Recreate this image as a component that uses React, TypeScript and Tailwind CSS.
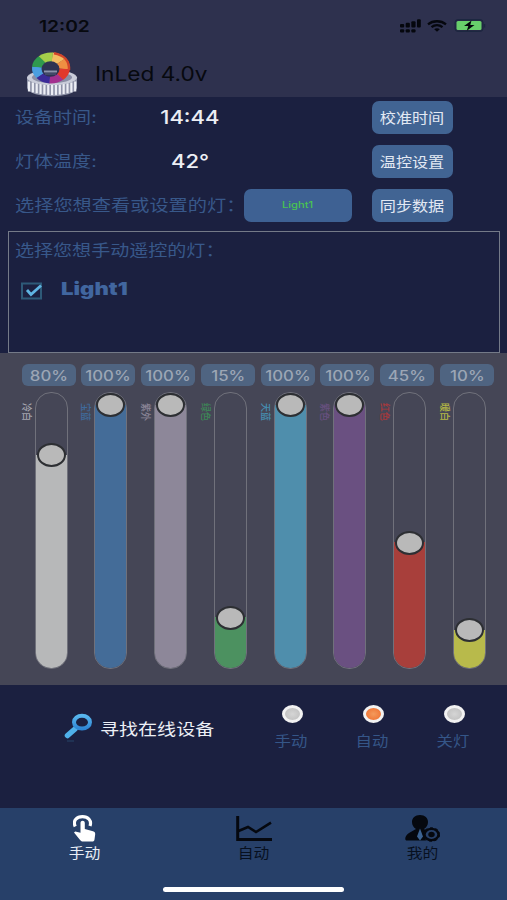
import { useState } from 'react';
import clsx from 'clsx';

type Mode = 'manual' | 'auto' | 'off';

type Channel = {
  name: string;
  value: number;
  fill: string;
  text: string;
};

const CHANNELS: Channel[] = [
  { name: '冷白', value: 80, fill: 'bg-[#b7b8b9]', text: 'text-[#a3a4ae]' },
  { name: '宝蓝', value: 100, fill: 'bg-[#446c98]', text: 'text-[#3f6a9c]' },
  { name: '紫外', value: 100, fill: 'bg-[#8d8799]', text: 'text-[#8d8799]' },
  { name: '绿色', value: 15, fill: 'bg-[#4c9160]', text: 'text-[#3d8757]' },
  { name: '天蓝', value: 100, fill: 'bg-[#4f8eac]', text: 'text-[#458db0]' },
  { name: '紫色', value: 100, fill: 'bg-[#6a5081]', text: 'text-[#68507f]' },
  { name: '红色', value: 45, fill: 'bg-[#a83f3b]', text: 'text-[#a8393c]' },
  { name: '暖白', value: 10, fill: 'bg-[#b8ba4b]', text: 'text-[#b4b745]' },
];

const MODES: { id: Mode; label: string }[] = [
  { id: 'manual', label: '手动' },
  { id: 'auto', label: '自动' },
  { id: 'off', label: '关灯' },
];

const WHEEL = ['#f3bd62', '#ef8f42', '#e2382c', '#a3308f', '#3b2a98', '#4b9ee0', '#2f9a4d', '#a5cf4a'];

// distance of the thumb centre from the top of the track
function thumbTop(value: number) {
  return 12.5 + (100 - value) * 2.505;
}

function Logo() {
  const pt = (deg: number) => {
    const a = (deg * Math.PI) / 180;
    return `${24 + 19 * Math.sin(a)} ${16 - 15.5 * Math.cos(a)}`;
  };
  return (
    <svg width="51" height="45" viewBox="0 0 51 45">
      <path d="M0 25v11c3 11 47 11 50 0V25z" fill="#8f93a8" />
      {Array.from({ length: 13 }, (_, i) => {
        const y = 29 + Math.sin(((i + 0.5) / 13) * Math.PI) * 4;
        return <path key={i} d={`M${2 + i * 3.85} ${y}v10`} stroke="#eceef5" strokeWidth="2.2" />;
      })}
      <ellipse cx="25" cy="25.5" rx="25" ry="7.5" fill="#c9ccd9" />
      <ellipse cx="25" cy="25.5" rx="20" ry="5.5" fill="#8a8ea6" />
      {WHEEL.map((c, i) => (
        <path key={c} d={`M24 16L${pt(i * 45 + 5)}A19 15.5 0 0 1 ${pt(i * 45 + 51)}z`} fill={c} />
      ))}
      <path d="M27 1.3C37 3 42.5 9 42 18" stroke="#d2452a" strokeWidth="2.5" fill="none" />
      <ellipse cx="23.5" cy="17" rx="9" ry="7.7" fill="#2d3352" />
      <path d="M17 19.5h13" stroke="#8d93ab" strokeWidth="2" />
      <path d="M18 22h11" stroke="#4a5070" strokeWidth="1.5" />
    </svg>
  );
}

function StatusIcons() {
  return (
    <div className="flex items-center">
      <svg width="21" height="14" viewBox="0 0 20 13" fill="#05070d">
        <rect x="0" y="4.5" width="4" height="3.5" rx="1" />
        <rect x="5.4" y="3.5" width="4" height="4.5" rx="1" />
        <rect x="10.8" y="2" width="4" height="6" rx="1" />
        <rect x="16.2" y="0" width="3.6" height="8" rx="1" />
        <rect x="0" y="9.5" width="4" height="3.3" rx="1" />
        <rect x="5.4" y="9.5" width="4" height="3.3" rx="1" />
        <rect x="10.8" y="9.5" width="4" height="3.3" rx="1" />
      </svg>
      <svg width="20" height="12" viewBox="0 0 20 12" className="ml-[6px]" fill="none" stroke="#05070d" strokeWidth="2.3">
        <path d="M1 4.3C6 .2 14 .2 19 4.3" />
        <path d="M4.5 7.2c3.2-2.6 7.8-2.6 11 0" />
        <path d="M7.2 9.2c1.6-1.3 4-1.3 5.6 0L10 11.8z" fill="#05070d" stroke="none" />
      </svg>
      <svg width="33" height="13" viewBox="0 0 32 13" className="ml-[7px]">
        <rect x=".5" y=".5" width="28" height="12" rx="3" fill="#252944" stroke="#1c2740" />
        <rect x="2" y="2" width="25" height="9" rx="1.5" fill="#68cf6b" />
        <path d="M17 1.5 9.5 7h4.3l-1.5 4.8L20 6h-4.2z" fill="#05070d" />
        <path d="M30 5v3.5" stroke="#1c2740" strokeWidth="1.4" />
      </svg>
    </div>
  );
}

function ActionButton({ label }: { label: string }) {
  return (
    <button type="button" className="flex h-[33px] w-[81px] items-center justify-center rounded-[7px] bg-[#416493] pb-px text-[14px] text-[#e3e9f3]">
      <span className="-ml-px scale-x-[1.15] whitespace-nowrap">{label}</span>
    </button>
  );
}

function InfoRow({ label, value, action }: { label: string; value: string; action: string }) {
  return (
    <div className="flex h-[41px] items-center">
      <div className="w-[100px] pb-[2px] pl-[15px]">
        <span className="inline-block origin-left scale-x-[1.19] whitespace-nowrap text-[16px] text-[#38588a]">{label}</span>
      </div>
      <div className="flex w-[180px] justify-center pt-px text-[18.5px] font-medium text-[#eceef4]">
        <span className="scale-x-[1.19]">{value}</span>
      </div>
      <div className="ml-[92px]">
        <ActionButton label={action} />
      </div>
    </div>
  );
}

function Slider({ channel }: { channel: Channel }) {
  const top = thumbTop(channel.value);
  return (
    <div className="flex w-[59.8px] flex-col">
      <div className="flex h-[22px] w-[54px] items-center justify-center rounded-[6px] bg-[#4f6481] text-[14px] font-medium text-[#9ca6b5]">
        <span className="scale-x-[1.2]">{channel.value}%</span>
      </div>
      <div className="mt-[6px] flex">
        <div className={clsx('mr-[2px] mt-[11px] h-5 w-[11px] origin-right scale-x-[1.15] text-[9px] font-medium leading-[11px] [writing-mode:vertical-rl] [text-orientation:sideways]', channel.text)}>
          {channel.name}
        </div>
        <div className="relative h-[277px] w-[33px]">
          <div className="flex h-full flex-col justify-end overflow-hidden rounded-[16px] border border-[#70717b]">
            <div className={channel.fill} style={{ height: 276 - top }} />
          </div>
          <div
            className="absolute left-[2px] h-[24px] w-[29px] -translate-y-1/2 rounded-[50%] border-2 border-[#2d2f33] bg-[#b9b9b9]"
            style={{ top: top + 0.5 }}
          />
        </div>
      </div>
    </div>
  );
}

function SearchIcon() {
  return (
    <svg width="30" height="32" viewBox="0 0 30 32" fill="none">
      <defs>
        <linearGradient id="lens" x1="0" y1="0" x2="0" y2="1">
          <stop offset="0" stopColor="#58b6ee" />
          <stop offset="1" stopColor="#2f86d4" />
        </linearGradient>
      </defs>
      <path d="M3.5 22.5 11 16" stroke="#4fb0e9" strokeWidth="5.5" strokeLinecap="round" />
      <ellipse cx="18" cy="9.2" rx="8" ry="6.4" stroke="url(#lens)" strokeWidth="4" />
      <path d="M3 28h7" stroke="#254468" strokeWidth="2" opacity=".5" />
    </svg>
  );
}

function TouchIcon() {
  return (
    <svg width="23" height="27" viewBox="0 0 23 27">
      <path d="M2.2 11.5C-.5 5.500 4 1.600 9.500 1.600S19 5.500 17 11" fill="none" stroke="#fff" strokeWidth="3.200" />
      <path d="M7.500 8c0-3 4.300-3 4.300 0v6l8.200 2.200c1.700.5 2.300 1.300 2.200 3l-.7 5.300c-.2 1.500-1 2-2.300 2H10c-1.200 0-1.900-.4-2.700-1.300L1 17.500l1.200-1.100 5.300 1.300z" fill="#fff" />
    </svg>
  );
}

function ChartIcon() {
  return (
    <svg width="36" height="26" viewBox="0 0 36 26" fill="none" stroke="#05080f">
      <path d="M1.7 0v23.5H36" strokeWidth="3" />
      <path d="M2.5 15 12 11l8 5 15-9.3" strokeWidth="2.6" />
    </svg>
  );
}

function UserGearIcon() {
  return (
    <svg width="35" height="27" viewBox="0 0 35 27">
      <path d="M15 0c5 0 8 3 8 7 0 3-1.5 5.5-4 7l3 2c-2.5 2-3 6-1 9.5H2C-1 25.5 0 20.5 4 18l7-4C8.5 12.5 7 10 7 7c0-4 3-7 8-7z" fill="#05080f" />
      <path d="m15 13.5 3 8-3 4-3-4z" fill="#3c6291" />
      <ellipse cx="26.5" cy="19.5" rx="7" ry="5.6" fill="#274069" stroke="#05080f" strokeWidth="2.4" />
      <ellipse cx="26.5" cy="19.5" rx="8.2" ry="6.8" fill="none" stroke="#05080f" strokeWidth="1" strokeDasharray="3 2.6" />
      <ellipse cx="26.5" cy="19.5" rx="3.2" ry="2.7" fill="#05080f" />
    </svg>
  );
}

export default function App() {
  const [mode, setMode] = useState<Mode>('auto');
  const [checked, setChecked] = useState(true);

  return (
    <main className="flex h-[900px] w-[507px] flex-col overflow-hidden bg-[#1b2040] font-['Inter','Noto_Sans_CJK_SC',sans-serif]">
      <header className="h-[97px] shrink-0 bg-[#2e314e] text-[#07090f]">
        <div className="flex h-[52px] items-center justify-between pb-px pl-[39px] pr-[20px]">
          <span className="origin-left scale-x-[1.2] text-[16px] font-semibold">12:02</span>
          <StatusIcons />
        </div>
        <div className="flex items-center pl-[27px]">
          <Logo />
          <h1 className="ml-[17px] origin-left scale-x-[1.16] pt-px text-[19.5px]">InLed 4.0v</h1>
        </div>
      </header>

      <section className="flex h-[134px] shrink-0 flex-col gap-[3px]">
        <InfoRow label="设备时间:" value="14:44" action="校准时间" />
        <InfoRow label="灯体温度:" value="42°" action="温控设置" />
        <div className="flex h-[41px] items-center">
          <div className="w-[244px] pb-px pl-[15px]">
            <span className="inline-block origin-left scale-x-[1.2] whitespace-nowrap text-[16px] text-[#38588a]">
              选择您想查看或设置的灯：
            </span>
          </div>
          <button type="button" className="mr-5 flex h-[33px] w-[108px] items-center justify-center rounded-[7px] bg-[#3e6193] pb-px text-[9px] font-medium text-[#49c552]">
            <span className="scale-x-[1.24]">Light1</span>
          </button>
          <ActionButton label="同步数据" />
        </div>
      </section>

      <section className="ml-2 mr-[7px] h-[122px] shrink-0 border border-[#747a88] pl-[6px] pt-[6px]">
        <p className="origin-left scale-x-[1.19] whitespace-nowrap text-[16px] text-[#38588a]">选择您想手动遥控的灯：</p>
        <button type="button" onClick={() => setChecked(!checked)} className="mt-[13px] flex items-center pl-[6px]">
          <svg width="22" height="20" viewBox="0 0 22 20" fill="none" className="mt-[4px]">
            <rect x="1" y="2.5" width="19" height="15" stroke="#2e5a78" strokeWidth="2" />
            {checked && <path d="m6 9 4 4.5L20 4.5" stroke="#5fb4e2" strokeWidth="2.8" />}
          </svg>
          <span className="ml-[18px] origin-left scale-x-[1.23] text-[18px] font-black text-[#41669f]">Light1</span>
        </button>
      </section>

      <section className="flex h-[332px] shrink-0 bg-[#454656] pl-[21.5px] pt-[11px]">
        {CHANNELS.map((c) => (
          <Slider key={c.name} channel={c} />
        ))}
      </section>

      <section className="flex h-[123px] shrink-0">
        <button type="button" className="flex h-[88px] w-[250px] items-center pl-[64px]">
          <SearchIcon />
          <span className="ml-[6px] origin-left scale-x-[1.19] text-[16px] text-[#eceff5]">寻找在线设备</span>
        </button>
        <div className="flex pt-[20px]">
          {MODES.map((m) => (
            <button key={m.id} type="button" onClick={() => setMode(m.id)} className="flex w-[81px] flex-col items-center">
              <span
                className={clsx(
                  'ml-[3px] h-[18px] w-[21px] rounded-[50%] border-[3px] border-[#f2f2f2]',
                  mode === m.id ? 'bg-radial from-[#f39a5c] to-[#ee6a27]' : 'bg-radial from-[#d5d5d5] to-[#bcbcbc]'
                )}
              />
              <span className="mt-[7px] scale-x-[1.17] text-[14px] text-[#355688]">{m.label}</span>
            </button>
          ))}
        </div>
      </section>

      <nav className="flex h-[92px] shrink-0 flex-col items-center bg-[#274069]">
        <div className="grid h-[79px] w-full grid-cols-3 text-[13.5px] text-[#07101f]">
          <div className="flex flex-col items-center pt-[7px] text-[#e9eef6]">
            <TouchIcon />
            <span className="mt-px scale-x-[1.17]">手动</span>
          </div>
          <div className="flex flex-col items-center pt-2">
            <ChartIcon />
            <span className="mt-px scale-x-[1.17]">自动</span>
          </div>
          <div className="flex flex-col items-center pt-[7px]">
            <UserGearIcon />
            <span className="mt-px scale-x-[1.17]">我的</span>
          </div>
        </div>
        <div className="h-[5px] w-[181px] rounded-full bg-white" />
      </nav>
    </main>
  );
}
